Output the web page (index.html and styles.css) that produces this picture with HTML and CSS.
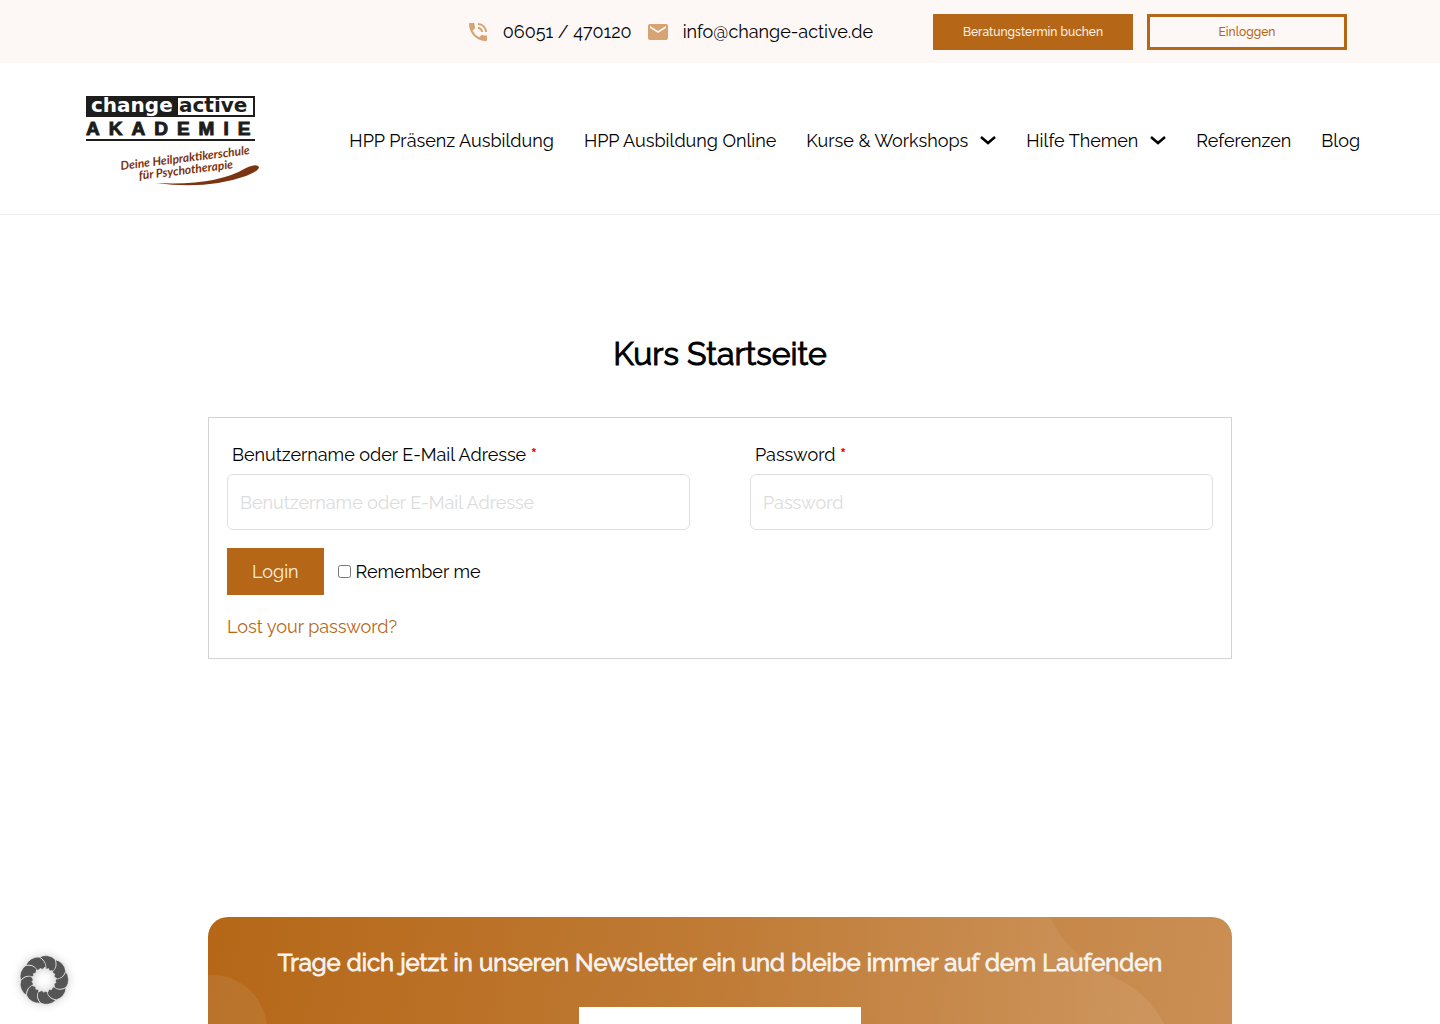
FILE: index.html
```html
<!DOCTYPE html>
<html lang="de">
<head>
    <meta charset="UTF-8">
    <meta name="viewport" content="width=device-width, initial-scale=1.0">
    <title>Kurs Startseite</title>
    <link rel="stylesheet" href="styles.css">
</head>
<body>
    <!-- Top bar -->
    <div class="top-bar">
        <div class="contact">
            <a href="tel:06051470120">
                <svg class="phone-icon" viewBox="0 0 24 24" aria-hidden="true"><path d="M20 15.500c-1.250 0-2.450-.2-3.570-.57a1.020 1.020 0 0 0-1.020.24l-2.200 2.200a15.040 15.040 0 0 1-6.590-6.580l2.200-2.210c.28-.27.36-.66.25-1.010A11.360 11.360 0 0 1 8.500 4c0-.55-.45-1-1-1H4c-.55 0-1 .45-1 1 0 9.390 7.610 17 17 17 .55 0 1-.45 1-1v-3.500c0-.55-.45-1-1-1zM19 12h2a9 9 0 0 0-9-9v2c3.870 0 7 3.130 7 7zm-4 0h2c0-2.760-2.240-5-5-5v2c1.660 0 3 1.340 3 3z"/></svg>
                <span>06051 / 470120</span>
            </a>
            <a href="mailto:info@change-active.de">
                <svg class="mail-icon" viewBox="2 4 20 16" aria-hidden="true"><path d="M20 4H4c-1.100 0-1.990.9-1.990 2L2 18c0 1.100.9 2 2 2h16c1.100 0 2-.9 2-2V6c0-1.100-.9-2-2-2zm0 4-8 5-8-5V6l8 5 8-5v2z"/></svg>
                <span>info@change-active.de</span>
            </a>
        </div>
        <div class="top-buttons">
            <a href="#termin" class="top-button filled">Beratungstermin buchen</a>
            <a href="#login" class="top-button">Einloggen</a>
        </div>
    </div>

    <!-- Header -->
    <header class="header">
        <a href="#" class="logo" aria-label="changeactive Akademie">
            <svg viewBox="0 0 174 92" width="174" height="92">
                <rect x="1" y="2" width="167" height="19" fill="#fff" stroke="#1d1d1b" stroke-width="2"/>
                <rect x="0" y="1" width="92" height="21" fill="#1d1d1b"/>
                <text class="logo-change" x="5" y="17">change</text>
                <text class="logo-active" x="93" y="17">active</text>
                <text class="logo-akademie" x="0" y="40">AKADEMIE</text>
                <rect x="0" y="44" width="169" height="2" fill="#1d1d1b"/>
                <g class="logo-claim" transform="rotate(-7 35 75)">
                    <text x="35" y="75">Deine Heilpraktikerschule</text>
                    <text x="52" y="87">für Psychotherapie</text>
                </g>
                <path d="M70 88 Q130 91 160 73 Q171 68 173 72 Q173 76 160 81 Q120 95 70 88z" fill="#7b3411"/>
            </svg>
        </a>
        <nav class="nav">
            <a href="#praesenz">HPP Präsenz Ausbildung</a>
            <a href="#online">HPP Ausbildung Online</a>
            <a href="#kurse">Kurse &amp; Workshops
                <svg viewBox="0 0 16 10" aria-hidden="true"><path d="M1 1l7 6 7-6"/></svg>
            </a>
            <a href="#hilfe">Hilfe Themen
                <svg viewBox="0 0 16 10" aria-hidden="true"><path d="M1 1l7 6 7-6"/></svg>
            </a>
            <a href="#referenzen">Referenzen</a>
            <a href="#blog">Blog</a>
        </nav>
    </header>

    <main class="main">
        <h1>Kurs Startseite</h1>

        <!-- Login form -->
        <form class="login-form" id="login">
            <div class="fields">
                <div class="field">
                    <label for="username">Benutzername oder E-Mail Adresse <span class="required">*</span></label>
                    <input type="text" id="username" placeholder="Benutzername oder E-Mail Adresse">
                </div>
                <div class="field">
                    <label for="password">Password <span class="required">*</span></label>
                    <input type="password" id="password" placeholder="Password">
                </div>
            </div>
            <div class="actions">
                <button type="submit">Login</button>
                <div class="remember">
                    <input type="checkbox" id="remember">
                    <label for="remember">Remember me</label>
                </div>
            </div>
            <a href="#lost" class="lost">Lost your password?</a>
        </form>

        <!-- Newsletter -->
        <section class="newsletter">
            <svg class="shapes" viewBox="0 0 1024 260" preserveAspectRatio="xMidYMin slice" aria-hidden="true">
                <defs>
                    <linearGradient id="wave" x1="0" y1="0" x2="1" y2="0">
                        <stop offset="0" stop-color="#fff" stop-opacity="0"/>
                        <stop offset="1" stop-color="#fff" stop-opacity="0.08"/>
                    </linearGradient>
                </defs>
                <circle cx="4" cy="113" r="55" fill="#fff" fill-opacity="0.08"/>
                <path d="M500 0H843C852 25 872 42 900 57C928 70 944 84 956 107C966 130 968 180 940 260H500z" fill="url(#wave)"/>
            </svg>
            <h2>Trage dich jetzt in unseren Newsletter ein und bleibe immer auf dem Laufenden</h2>
            <input type="email" aria-label="E-Mail">
        </section>
    </main>

    <!-- Cookie settings -->
    <button class="cookie-button" type="button" aria-label="Cookies">
        <svg viewBox="-25 -25 50 50">
            <defs>
                <path id="petal" d="M-4.500-22.800A13 13 0 0 1 11.200-20.400Q13.600-14 9.700-8.200Q9-9.800 7-9.200Q5-8.500 4.500-11.500Q3-10.300 1.200-11.800Q2.200-19.500-4.500-22.800z"/>
            </defs>
            <use href="#petal"/>
            <use href="#petal" transform="rotate(40)"/>
            <use href="#petal" transform="rotate(80)"/>
            <use href="#petal" transform="rotate(120)"/>
            <use href="#petal" transform="rotate(160)"/>
            <use href="#petal" transform="rotate(200)"/>
            <use href="#petal" transform="rotate(240)"/>
            <use href="#petal" transform="rotate(280)"/>
            <use href="#petal" transform="rotate(320)"/>
        </svg>
    </button>
</body>
</html>
```

FILE: styles.css
```css
* {
    box-sizing: border-box;
}

body {
    margin: 0;
    font-family: Raleway, Lato, sans-serif;
    font-size: 18px;
    line-height: 28px;
    color: #000;
    background: #fff;
}

a {
    color: inherit;
    text-decoration: none;
}

/* Top bar */
.top-bar {
    display: flex;
    justify-content: flex-end;
    align-items: center;
    gap: 60px;
    padding: 14px 93px 13px;
    background: #fdf8f5;
}

.contact {
    display: flex;
    gap: 16px;
}

.contact a {
    display: flex;
    align-items: center;
    gap: 15px;
}

.contact svg {
    fill: #d6a373;
}

.phone-icon {
    width: 24px;
    height: 24px;
    margin: 0 -2px;
}

.mail-icon {
    width: 20px;
    height: 16px;
}

.top-buttons {
    display: flex;
    gap: 14px;
}

.top-button {
    width: 200px;
    border: 3px solid #b56717;
    color: #b56717;
    font-size: 12px;
    font-weight: 500;
    line-height: 30px;
    text-align: center;
}

.top-button.filled {
    background: #b56717;
    color: #fdf0e2;
}

/* Header */
.header {
    display: flex;
    justify-content: space-between;
    align-items: center;
    padding: 32px 80px 27px 86px;
    border-bottom: 1px solid #eee;
}

.logo svg {
    display: block;
    overflow: visible;
}

.logo-change,
.logo-active {
    font-family: "DejaVu Sans", sans-serif;
    font-size: 20px;
    font-weight: bold;
    fill: #fff;
}

.logo-active {
    fill: #1d1d1b;
}

.logo-akademie {
    font-family: "Liberation Sans", sans-serif;
    font-size: 19px;
    font-weight: bold;
    letter-spacing: 9px;
    fill: #1d1d1b;
    stroke: #1d1d1b;
}

.logo-claim {
    font-family: Lato, sans-serif;
    font-size: 12px;
    font-style: italic;
    font-weight: bold;
    fill: #7b3411;
}

.nav {
    display: flex;
    gap: 30px;
}

.nav a {
    display: flex;
    align-items: center;
    gap: 12px;
}

.nav svg {
    width: 16px;
    height: 10px;
    fill: none;
    stroke: #000;
    stroke-width: 2.5;
}

/* Content */
.main {
    width: 100%;
    max-width: 1064px;
    margin: 0 auto;
    padding: 115px 20px 40px;
}

h1,
h2 {
    font-weight: 400;
    -webkit-text-stroke: 1px;
}

h1 {
    margin: 0 0 39px;
    font-size: 32px;
    line-height: 48px;
    text-align: center;
}

.login-form {
    padding: 23px 18px 17px;
    border: 1px solid #d3d3d3;
}

.fields {
    display: grid;
    grid-template-columns: 1fr 1fr;
    gap: 60px;
}

.field label {
    display: block;
    padding: 0 5px;
    margin-bottom: 5px;
}

.required {
    color: #f00;
    font-weight: bold;
}

.field input {
    display: block;
    width: 100%;
    height: 56px;
    padding: 0 12px;
    border: 1px solid #e0e0e0;
    border-radius: 6px;
    font: inherit;
}

.field input::placeholder {
    color: #dcdcdc;
}

.actions {
    display: flex;
    align-items: center;
    gap: 14px;
    margin: 18px 0;
}

.actions button {
    padding: 10px 25px 9px;
    border: 0;
    background: #b56717;
    color: #fdf0e2;
    font: inherit;
}

.remember {
    display: flex;
    align-items: center;
    gap: 5px;
}

.remember input {
    width: 13px;
    height: 13px;
    margin: 0;
}

.lost {
    display: inline-block;
    color: #b56717;
}

/* Newsletter */
.newsletter {
    position: relative;
    overflow: hidden;
    margin-top: 258px;
    padding: 28px 20px 100px;
    border-radius: 20px;
    background: linear-gradient(100deg, #b56717, #cb9056);
    text-align: center;
}

.shapes {
    position: absolute;
    top: 0;
    left: 0;
    width: 100%;
    height: 100%;
}

.newsletter h2 {
    position: relative;
    margin: 0 0 26px;
    color: #f5f3f1;
    font-size: 24px;
    line-height: 36px;
}

.newsletter input {
    position: relative;
    width: 282px;
    height: 50px;
    padding: 0 12px;
    border: 0;
    background: #fff;
    font: inherit;
}

/* Cookie button */
.cookie-button {
    position: fixed;
    left: 19px;
    bottom: 19px;
    width: 50px;
    height: 50px;
    padding: 0;
    border: 0;
    background: none;
}

.cookie-button svg {
    display: block;
    overflow: visible;
    fill: #555;
    stroke: #fff;
    stroke-width: 0.5;
    filter: drop-shadow(0 0 4px rgba(0, 0, 0, 0.2));
}
```
